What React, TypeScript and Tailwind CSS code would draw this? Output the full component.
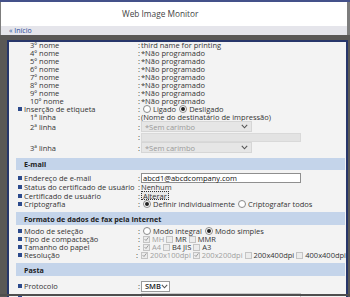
import React from "react";

const font = { fontFamily: '"Open Sans", "Noto Sans", "Liberation Sans", sans-serif' };

function Bullet() {
  return <span className="inline-block w-[4px] h-[4px] bg-[#2c4a8c] mr-[2px] shrink-0" />;
}

function Radio({ checked }: { checked?: boolean }) {
  return (
    <span className="inline-flex items-center justify-center w-[8px] h-[8px] rounded-full border border-[#8a8a8a] bg-white mx-[2px] shrink-0">
      {checked && <span className="w-[4px] h-[4px] rounded-full bg-[#222]" />}
    </span>
  );
}

function Check({ checked }: { checked?: boolean }) {
  return (
    <span className="inline-flex items-center justify-center w-[7px] h-[7px] border border-[#c4c4c4] bg-[#ececec] mx-[2px] shrink-0">
      {checked && (
        <svg width="6" height="6" viewBox="0 0 6 6">
          <path d="M0.8 3.2 L2.4 4.8 L5.3 1" stroke="#8a8a8a" strokeWidth="1" fill="none" />
        </svg>
      )}
    </span>
  );
}

function Chevron() {
  return (
    <svg width="7" height="5" viewBox="0 0 7 5" className="shrink-0">
      <path d="M0.8 0.8 L3.5 3.8 L6.2 0.8" stroke="#555" strokeWidth="1.1" fill="none" />
    </svg>
  );
}

function Row({
  label,
  bullet,
  children,
  h = "h-[8px]",
}: {
  label?: string;
  bullet?: boolean;
  children?: React.ReactNode;
  h?: string;
}) {
  return (
    <div className={`flex items-center ${h} pl-[9px] shrink-0`}>
      <div className={`w-[120px] flex items-center whitespace-nowrap ${bullet ? "" : "pl-[12px]"}`}>
        {bullet && <Bullet />}
        {label}
      </div>
      <div className="flex items-center whitespace-nowrap">
        <span className="mr-[1px]">:</span>
        {children}
      </div>
    </div>
  );
}

function Band({ title, mt = "mt-[5px]", mb = "mb-[3px]", h = "h-[12px]" }: { title: string; mt?: string; mb?: string; h?: string }) {
  return (
    <div className={`${mt} ${mb} ${h} ml-[7px] mr-[1px] bg-[#c4d4ea] flex items-center pl-[8px] font-bold text-[#222] text-[7.2px] shrink-0`}>
      {title}
    </div>
  );
}

function SelectBox({ text, w, disabled }: { text: string; w: string; disabled?: boolean }) {
  return (
    <div
      className={`${w} h-[11px] flex items-center justify-between px-[3px] border ${
        disabled ? "border-[#d6d6d6] bg-[#e6e6e6] text-[#9a9a9a]" : "border-[#9a9a9a] bg-white text-[#222] font-semibold"
      }`}
    >
      <span>{text}</span>
      <Chevron />
    </div>
  );
}

export default function App() {
  return (
    <div className="w-[350px] h-[297px] overflow-hidden flex flex-col bg-[#7d7d7d] text-[#333] text-[7.5px] leading-[8px]" style={font}>
      <div className="h-[2px] bg-[#44518a] shrink-0" />
      <div className="h-[24px] ml-[1px] mr-[3px] bg-white flex items-center pl-[121px] text-[8.3px] text-[#444] shrink-0">
        Web Image Monitor
      </div>
      <div className="h-[9px] ml-[1px] mr-[3px] bg-[#e5e5eb] flex items-center pl-[8px] text-[#2c4a9a] text-[7px] shrink-0">
        « Início
      </div>
      <div className="flex-1 min-h-0 bg-[#5a5856] pt-[5px] pl-[7px] pr-[2px] flex flex-col relative">
        <div className="flex-1 min-h-0 border-t-2 border-l-2 border-r-2 border-[#27366a] bg-[#f3f3f3] overflow-hidden flex flex-col">
          <div className="-mt-[1px] flex flex-col">
            <Row label="3º nome">third name for printing</Row>
            <Row label="4º nome">*Não programado</Row>
            <Row label="5º nome">*Não programado</Row>
            <Row label="6º nome">*Não programado</Row>
            <Row label="7º nome">*Não programado</Row>
            <Row label="8º nome">*Não programado</Row>
            <Row label="9º nome">*Não programado</Row>
            <Row label="10º nome">*Não programado</Row>
            <Row label="Inserção de etiqueta" bullet>
              <Radio />
              <span className="mr-[1px]">Ligado</span>
              <Radio checked />
              <span>Desligado</span>
            </Row>
            <Row label="1ª linha">(Nome do destinatário de impressão)</Row>
            <Row label="2ª linha" h="h-[11px]">
              <SelectBox text="*Sem carimbo" w="w-[111px]" disabled />
            </Row>
            <Row h="h-[10px]">
              <div className="w-[160px] h-[9px] border border-[#d9d9d9] bg-[#e3e3e3]" />
            </Row>
            <Row label="3ª linha" h="h-[11px]">
              <SelectBox text="*Sem carimbo" w="w-[111px]" disabled />
            </Row>

            <Band title="E-mail" />
            <Row label="Endereço de e-mail" bullet h="h-[10px]">
              <div className="w-[160px] h-[10px] border border-[#8f8f8f] bg-white flex items-center px-[1px] text-[#111]">
                abcd1@abcdcompany.com
              </div>
            </Row>
            <Row label="Status do certificado de usuário" bullet>
              Nenhum
            </Row>
            <Row label="Certificado de usuário" bullet h="h-[9px]">
              <span className="border border-dotted border-[#333] bg-[#e9e9e9] px-[1px] h-[9px] flex items-center">Alterar</span>
            </Row>
            <Row label="Criptografia" bullet>
              <Radio checked />
              <span className="mr-[1px]">Definir individualmente</span>
              <Radio />
              <span>Criptografar todos</span>
            </Row>

            <Band title="Formato de dados de fax pela Internet" mt="mt-[4px]" h="h-[13px]" mb="mb-[2px]" />
            <Row label="Modo de seleção" bullet>
              <Radio />
              <span className="mr-[1px]">Modo integral</span>
              <Radio checked />
              <span>Modo simples</span>
            </Row>
            <Row label="Tipo de compactação" bullet>
              <Check checked />
              <span className="text-[#a0a0a0]">MH</span>
              <Check />
              <span>MR</span>
              <Check />
              <span>MMR</span>
            </Row>
            <Row label="Tamanho do papel" bullet>
              <Check checked />
              <span className="text-[#a0a0a0]">A4</span>
              <Check />
              <span>B4 JIS</span>
              <Check />
              <span>A3</span>
            </Row>
            <Row label="Resolução" bullet>
              <Check checked />
              <span className="text-[#a0a0a0]">200x100dpi</span>
              <Check checked />
              <span className="text-[#a0a0a0]">200x200dpi</span>
              <Check />
              <span>200x400dpi</span>
              <Check />
              <span>400x400dpi</span>
            </Row>

            <Band title="Pasta" mt="mt-[4px]" h="h-[13px]" mb="mb-[4px]" />
            <Row label="Protocolo" bullet h="h-[12px]">
              <SelectBox text="SMB" w="w-[29px]" />
            </Row>
            <div className="flex items-center h-[10px] pl-[9px] shrink-0">
              <div className="w-[120px] flex items-center">
                <Bullet />
              </div>
              <div className="ml-[3px] w-[160px] h-[9px] border border-[#c8c8c8] bg-white" />
            </div>
          </div>
        </div>
        <div className="absolute left-0 right-0 bottom-[1px] h-[2px] bg-[#4e4e4e]" />
      </div>
    </div>
  );
}
